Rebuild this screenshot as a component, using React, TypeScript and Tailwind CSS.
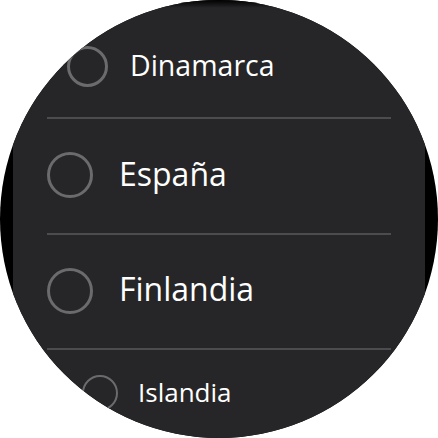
import React from "react";

function Radio({ size }: { size: "lg" | "md" | "sm" }) {
  const cls =
    size === "lg"
      ? "w-[46px] h-[46px] border-[3px]"
      : size === "md"
      ? "w-[41px] h-[41px] border-[3px]"
      : "w-[36px] h-[36px] border-[2.5px]";
  return <div className={`${cls} shrink-0 rounded-full border-[#6b6b6d]`} />;
}

function Divider() {
  return <div className="mx-[34px] h-[2px] shrink-0 bg-[#4c4c50]" />;
}

export default function App() {
  return (
    <div className="w-[438px] h-[438px] bg-white">
      <div className="relative w-[438px] h-[438px] rounded-full bg-black overflow-hidden">
        <div
          className="mx-[13px] h-full flex flex-col bg-[#262628] text-white"
          style={{ fontFamily: '"Open Sans", sans-serif' }}
        >
          {/* Dinamarca */}
          <div className="h-[117px] shrink-0 flex items-center pt-[15px] pl-[54px] gap-[22px]">
            <Radio size="md" />
            <span className="text-[28.5px] leading-none pb-[2px]">Dinamarca</span>
          </div>
          <Divider />
          {/* España */}
          <div className="h-[114px] shrink-0 flex items-center pb-[2px] pl-[34px] gap-[26px]">
            <Radio size="lg" />
            <span className="text-[32px] leading-none pb-[3px]">España</span>
          </div>
          <Divider />
          {/* Finlandia */}
          <div className="h-[113px] shrink-0 flex items-center pb-[2px] pl-[34px] gap-[26px]">
            <Radio size="lg" />
            <span className="text-[32px] leading-none pb-[3px]">Finlandia</span>
          </div>
          <Divider />
          {/* Islandia */}
          <div className="h-[86px] shrink-0 flex items-center pl-[69px] gap-[20px]">
            <Radio size="sm" />
            <span className="text-[26px] leading-none pb-[2px]">Islandia</span>
          </div>
        </div>
        <div className="absolute left-0 top-0 w-full h-[8px] bg-gradient-to-b from-black to-transparent" />
      </div>
    </div>
  );
}
